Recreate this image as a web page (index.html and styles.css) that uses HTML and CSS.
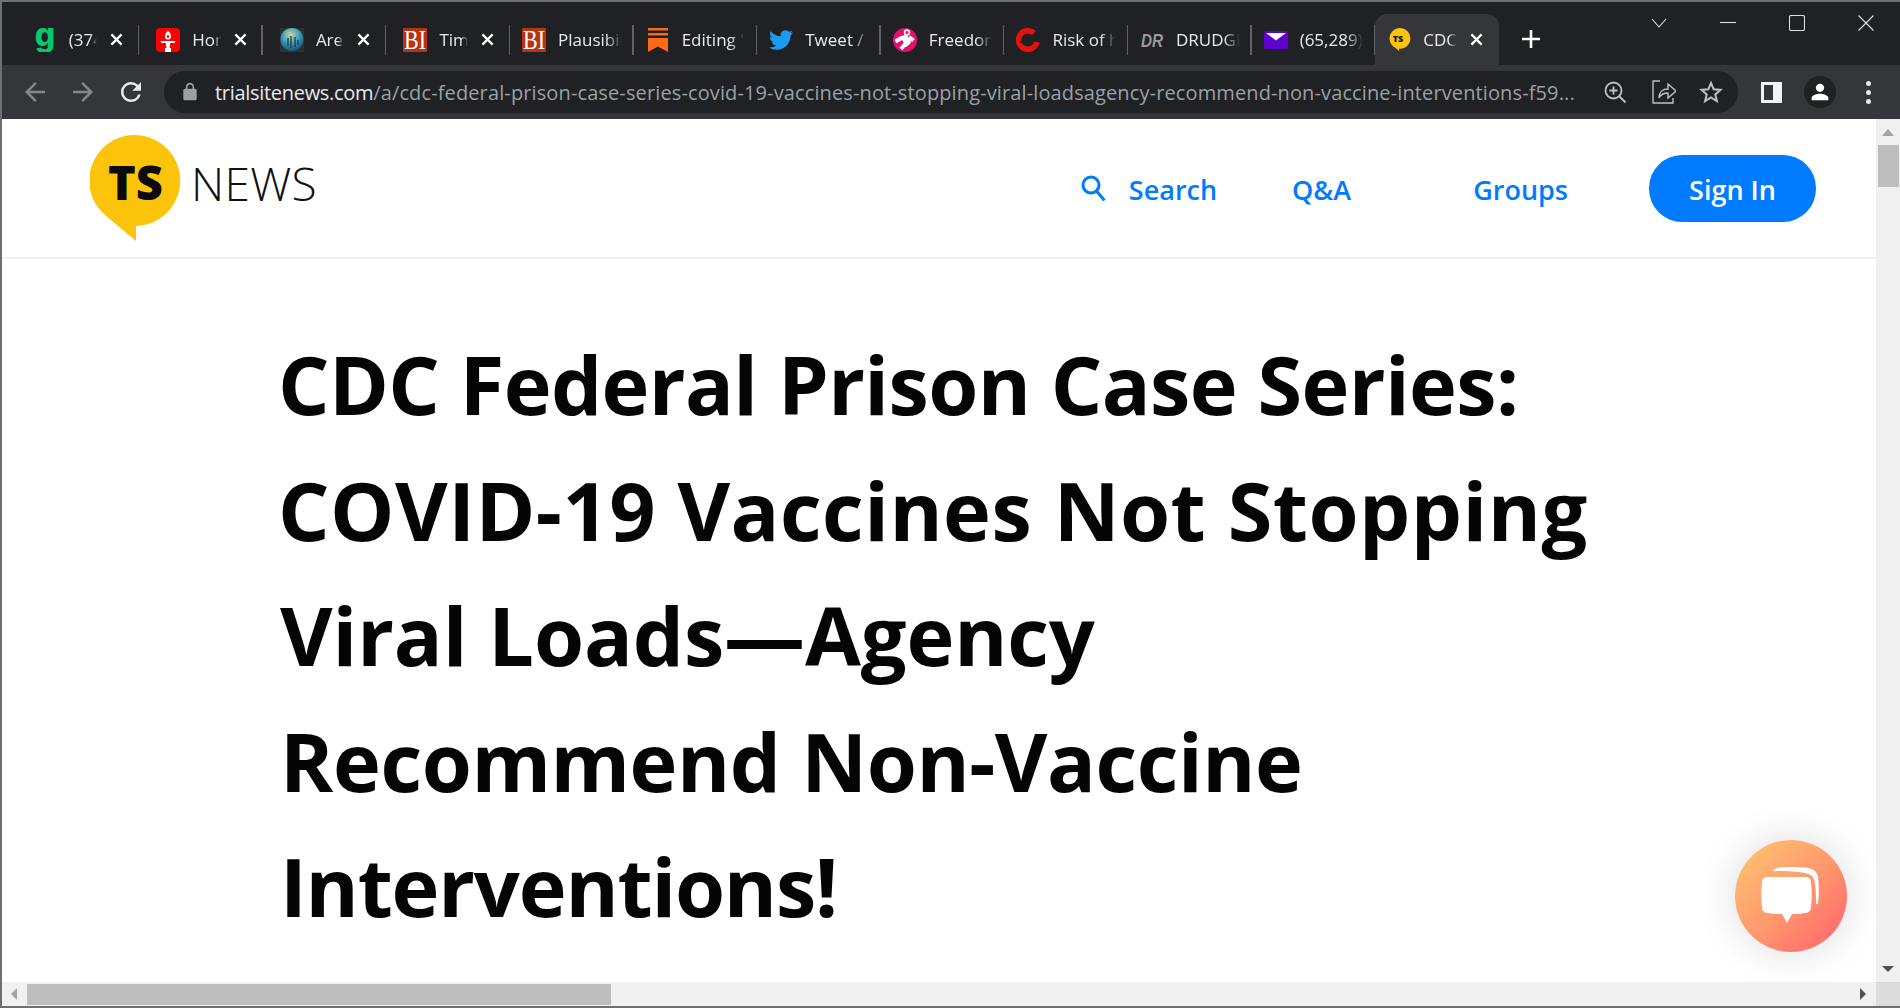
FILE: index.html
```html
<!DOCTYPE html>
<html lang="en">
<head>
<meta charset="UTF-8">
<meta name="viewport" content="width=device-width, initial-scale=1.0">
<title>CDC Federal Prison Case Series</title>
<link rel="stylesheet" href="styles.css">
</head>
<body>

<div class="tabstrip">
  <div class="tab has-close">
    <svg class="favicon" viewBox="0 0 24 24"><text x="12" y="17.600" text-anchor="middle" class="fav-g">g</text></svg>
    <span class="tab-title">(374) Grammarly</span>
    <svg class="tab-close" viewBox="0 0 14 14"><path d="M1.5 1.500l11 11M12.500 1.500l-11 11"/></svg>
  </div>
  <div class="tab has-close">
    <svg class="favicon" viewBox="0 0 24 24">
      <rect width="24" height="24" rx="4" fill="#f20505"/>
      <path d="M12 2.500c2.200 2.300 3 4.300 3 6a3 3 0 0 1-6 0c0-1.700.8-3.700 3-6z" fill="#fff"/>
      <path d="M12 6.500c.8 1 1.100 1.800 1.100 2.500a1.100 1.100 0 0 1-2.200 0c0-.7.3-1.500 1.100-2.500z" fill="#f20505"/>
      <path d="M4.500 13h15l-1 2h-4.200l-.8 5H15v4H9v-4h1.500l-.8-5H5.500z" fill="#fff"/>
    </svg>
    <span class="tab-title">Home</span>
    <svg class="tab-close" viewBox="0 0 14 14"><path d="M1.5 1.500l11 11M12.500 1.500l-11 11"/></svg>
  </div>
  <div class="tab has-close">
    <svg class="favicon" viewBox="0 0 24 24">
      <defs><radialGradient id="globe" cx="0.45" cy="0.3" r="0.75"><stop offset="0" stop-color="#c4d8a0"/><stop offset="0.5" stop-color="#3c9cc0"/><stop offset="1" stop-color="#164a62"/></radialGradient></defs>
      <rect width="24" height="24" fill="#2c3234"/>
      <circle cx="12" cy="11.500" r="11.500" fill="url(#globe)"/>
      <path d="M8 10v8M11 8v12M15 9v10M18 12v5" stroke="#1b3440" stroke-width="1.200"/>
    </svg>
    <span class="tab-title">Are</span>
    <svg class="tab-close" viewBox="0 0 14 14"><path d="M1.5 1.500l11 11M12.500 1.500l-11 11"/></svg>
  </div>
  <div class="tab has-close">
    <svg class="favicon" viewBox="0 0 24 24"><rect width="24" height="24" rx="1" fill="#b8330f"/><text x="12" y="21" text-anchor="middle" textLength="22" lengthAdjust="spacingAndGlyphs" class="fav-bi">BI</text></svg>
    <span class="tab-title">Time</span>
    <svg class="tab-close" viewBox="0 0 14 14"><path d="M1.5 1.500l11 11M12.500 1.500l-11 11"/></svg>
  </div>
  <div class="tab">
    <svg class="favicon" viewBox="0 0 24 24"><rect width="24" height="24" rx="1" fill="#b8330f"/><text x="12" y="21" text-anchor="middle" textLength="22" lengthAdjust="spacingAndGlyphs" class="fav-bi">BI</text></svg>
    <span class="tab-title">Plausibility</span>
  </div>
  <div class="tab">
    <svg class="favicon" viewBox="0 0 24 24"><path d="M2 0h20v2.500H2zM2 5h20v2.500H2zM2 10h20v14l-10-5.500L2 24z" fill="#ff6719"/></svg>
    <span class="tab-title">Editing 'Vaccines'</span>
  </div>
  <div class="tab">
    <svg class="favicon" viewBox="0 0 24 24"><path d="M23.953 4.570a10 10 0 01-2.825.775 4.958 4.958 0 002.163-2.723c-.951.555-2.005.959-3.127 1.184a4.920 4.920 0 00-8.384 4.482C7.690 8.095 4.067 6.130 1.640 3.162a4.822 4.822 0 00-.666 2.475c0 1.710.870 3.213 2.188 4.096a4.904 4.904 0 01-2.228-.616v.060a4.923 4.923 0 003.946 4.827 4.996 4.996 0 01-2.212.085 4.936 4.936 0 004.604 3.417 9.867 9.867 0 01-6.102 2.105c-.390 0-.779-.023-1.170-.067a13.995 13.995 0 007.557 2.209c9.053 0 13.998-7.496 13.998-13.985 0-.210 0-.420-.015-.630A9.935 9.935 0 0024 4.590z" fill="#1d9bf0"/></svg>
    <span class="tab-title">Tweet / Twitter</span>
  </div>
  <div class="tab">
    <svg class="favicon" viewBox="0 0 24 24">
      <circle cx="12" cy="12" r="12" fill="#e5106b"/>
      <circle cx="14" cy="4.500" r="2.400" fill="none" stroke="#fff" stroke-width="1.600"/>
      <path d="M2.500 13.500l6-3.500 4.500-1 3 5-4 3.500M10.500 10l2.500 5-5 6M16 9l4.500 3.500" fill="none" stroke="#fff" stroke-width="4" stroke-linejoin="round"/>
    </svg>
    <span class="tab-title">Freedom</span>
  </div>
  <div class="tab">
    <svg class="favicon" viewBox="0 0 24 24">
      <path d="M18 5A9.300 9.300 0 1 0 21 14" fill="none" stroke="#e8120c" stroke-width="5.500"/>
      <path d="M4 13.500l6 3.500 6-1" fill="none" stroke="#202124" stroke-width="1.600"/>
    </svg>
    <span class="tab-title">Risk of harm</span>
  </div>
  <div class="tab">
    <svg class="favicon" viewBox="0 0 24 24"><text x="12" y="19" text-anchor="middle" textLength="22" lengthAdjust="spacingAndGlyphs" class="fav-dr">DR</text></svg>
    <span class="tab-title">DRUDGE</span>
  </div>
  <div class="tab">
    <svg class="favicon" viewBox="0 0 24 24"><rect y="3" width="24" height="18" rx="1.500" fill="#6001d2"/><path d="M2 5h20l-10 7.500z" fill="#fff"/></svg>
    <span class="tab-title">(65,289)</span>
  </div>
  <div class="tab tab-active has-close">
    <svg class="favicon" viewBox="0 0 24 24">
      <path d="M12 23l-4-3.400A10.400 10.400 0 1 1 12 20.800z" fill="#fcc30b"/>
      <text x="11" y="13.500" text-anchor="middle" class="fav-ts">TS</text>
    </svg>
    <span class="tab-title">CDC Federal</span>
    <svg class="tab-close" viewBox="0 0 14 14"><path d="M1.5 1.500l11 11M12.500 1.500l-11 11"/></svg>
  </div>

  <svg class="newtab" viewBox="0 0 18 18"><path d="M9 0v18M0 9h18"/></svg>

  <div class="winctl">
    <svg viewBox="0 0 16 16"><path d="M1 4l7 8 7-8"/></svg>
    <svg viewBox="0 0 16 16"><path d="M0 7.500h16"/></svg>
    <svg viewBox="0 0 16 16"><rect x="0.500" y="0.500" width="15" height="15" rx="1.500"/></svg>
    <svg viewBox="0 0 16 16"><path d="M0.500 0.500l15 15M15.500 0.500l-15 15"/></svg>
  </div>
</div>

<div class="toolbar">
  <svg class="tool tool-dim" viewBox="0 0 24 24"><path d="M20 11H7.830l5.590-5.590L12 4l-8 8 8 8 1.410-1.410L7.830 13H20v-2z"/></svg>
  <svg class="tool tool-dim" viewBox="0 0 24 24"><path d="M12 4l-1.410 1.410L16.170 11H4v2h12.170l-5.580 5.590L12 20l8-8z"/></svg>
  <svg class="tool" viewBox="0 0 24 24"><path d="M17.650 6.350A7.958 7.958 0 0012 4c-4.420 0-7.990 3.580-7.990 8s3.570 8 7.990 8c3.730 0 6.840-2.550 7.730-6h-2.080A5.990 5.990 0 0112 18c-3.310 0-6-2.690-6-6s2.690-6 6-6c1.660 0 3.140.690 4.220 1.780L13 11h7V4l-2.350 2.350z"/></svg>

  <div class="omnibox">
    <svg class="lock" viewBox="0 0 24 24"><path d="M18 8h-1V6c0-2.760-2.240-5-5-5S7 3.240 7 6v2H6c-1.100 0-2 .9-2 2v10c0 1.100.9 2 2 2h12c1.100 0 2-.9 2-2V10c0-1.100-.9-2-2-2zM9 8V6c0-1.660 1.340-3 3-3s3 1.340 3 3v2H9z"/></svg>
    <div class="url"><b>trialsitenews.com</b>/a/cdc-federal-prison-case-series-covid-19-vaccines-not-stopping-viral-loadsagency-recommend-non-vaccine-interventions-f59...</div>
    <svg class="omni-icon zoom-icon" viewBox="0 0 24 24"><circle cx="10.500" cy="10.500" r="8"/><path d="M16.500 16.500l6 6M10.500 6.500v8M6.500 10.500h8"/></svg>
    <svg class="omni-icon share-icon" viewBox="0 0 24 24"><path d="M8 1H1v22h20v-5"/><path d="M7 18c0-6 4-9 9-9V4l8 7-8 7v-5c-4 0-7 1-9 5z"/></svg>
    <svg class="omni-icon star-icon" viewBox="0 0 24 24"><path d="M12 3l2.700 6.300 6.800.6-5.200 4.500 1.600 6.700-5.900-3.600-5.900 3.600 1.600-6.700L2.500 9.900l6.800-.6z"/></svg>
  </div>

  <svg class="panel-icon" viewBox="0 0 21 21"><path d="M0 0h21v21H0zM3 3v15h9V3z" fill-rule="evenodd"/></svg>
  <div class="avatar"><svg viewBox="0 0 24 24"><path d="M12 12c2.760 0 5-2.240 5-5s-2.240-5-5-5-5 2.240-5 5 2.240 5 5 5zm0 2c-3.340 0-10 1.670-10 5v3h20v-3c0-3.330-6.660-5-10-5z"/></svg></div>
  <div class="dots"><i></i><i></i><i></i></div>
</div>

<div class="viewport">
  <div class="page">
    <header class="site-header">
      <a class="logo">
        <svg class="logo-mark" viewBox="0 0 91 106">
          <path d="M46 106L15 80A45.500 45.500 0 1 1 46 91z" fill="#fcc30b"/>
          <text x="45.500" y="65" text-anchor="middle" class="logo-ts">TS</text>
        </svg>
        <span class="logo-news">NEWS</span>
      </a>
      <nav class="site-nav">
        <a class="nav-search">
          <svg viewBox="0 0 26 26"><circle cx="10" cy="10" r="8"/><path d="M15.500 16l8 9.500"/></svg>
          Search
        </a>
        <a class="nav-qa">Q&amp;A</a>
        <a class="nav-groups">Groups</a>
        <a class="btn-signin">Sign In</a>
      </nav>
    </header>

    <main class="article">
      <h1>
        <span class="line-1">CDC Federal Prison Case Series:</span>
        <span class="line-2">COVID-19 Vaccines Not Stopping</span>
        <span class="line-3">Viral Loads—Agency</span>
        <span class="line-4">Recommend Non-Vaccine</span>
        <span class="line-5">Interventions!</span>
      </h1>
    </main>

    <div class="chat-widget">
      <svg viewBox="0 0 112 112">
        <path d="M38 31c2-3 6-4 14-4 9 0 16 0 21 1 6 1 9 4 10 9 1 8 1 19 0 27l-2 0c0-8 0-18-2-24-1-4-4-6-9-7-10-2-22-2-32-2z" fill="#fff"/>
        <path d="M33 37h37c4 0 6 2 6 6 1 8 1 16 0 24 0 4-3 6-6 6-4 1-8 1-13 1l-5 9-5-9c-5 0-10 0-14-1-3 0-6-2-6-6-1-8-1-16 0-24 0-4 2-6 6-6z" fill="#fff"/>
      </svg>
    </div>
  </div>

  <div class="vscroll">
    <span class="arrow-up"></span>
    <span class="vthumb"></span>
    <span class="arrow-down"></span>
  </div>
</div>

<div class="hscroll">
  <span class="arrow-left"></span>
  <span class="hthumb"></span>
  <span class="arrow-right"></span>
  <span class="corner"></span>
</div>

</body>
</html>
```

FILE: styles.css
```css
* {
  box-sizing: border-box;
}
html, body {
  margin: 0;
  height: 100%;
}
body {
  width: 1900px;
  height: 1008px;
  overflow: hidden;
  display: flex;
  flex-direction: column;
  border: 2px solid #6f6f6f;
  border-right: 0;
  font-family: "Open Sans", "Noto Sans", sans-serif;
  background: #fff;
}

/* tab strip */
.tabstrip {
  height: 63px;
  flex: none;
  display: flex;
  align-items: flex-end;
  padding-left: 13.700px;
  background: #202124;
}
.tab {
  position: relative;
  width: 123.600px;
  height: 51px;
  flex: none;
  display: flex;
  align-items: center;
  padding: 0 12px 0 12px;
  color: #e8eaed;
  font-size: 17px;
}
.tab.has-close {
  padding: 0 16px 0 17px;
}
.tab::after {
  content: "";
  position: absolute;
  right: 0;
  top: 11px;
  width: 1.500px;
  height: 30px;
  background: #5f6368;
}
.tab-active {
  background: #35363a;
  border-radius: 12px 12px 0 0;
}
.tab.tab-active {
  padding-left: 12px;
}
.tab-active::after {
  display: none;
}
.favicon {
  width: 24px;
  height: 24px;
  flex: none;
  margin-right: 12px;
}
.tab-title {
  flex: 1;
  min-width: 0;
  white-space: nowrap;
  overflow: hidden;
  -webkit-mask-image: linear-gradient(to right, #000 75%, transparent 100%);
  mask-image: linear-gradient(to right, #000 75%, transparent 100%);
}
.tab-close {
  width: 13px;
  height: 13px;
  flex: none;
  margin-left: 13px;
  fill: none;
  stroke: #fff;
  stroke-width: 2.400;
}
.fav-g {
  font: 800 32px Inter, sans-serif;
  fill: #06c96d;
}
.fav-bi {
  font: 400 28px "Liberation Serif", serif;
  fill: #fff;
}
.fav-dr {
  font: italic 700 19px "Liberation Sans", sans-serif;
  fill: #9a9a9a;
}
.fav-ts {
  font: 800 9px "Open Sans", sans-serif;
  fill: #111;
}
.newtab {
  width: 18px;
  height: 18px;
  flex: none;
  margin: 0 0 17px 23px;
  fill: none;
  stroke: #fff;
  stroke-width: 2.600;
}
.winctl {
  align-self: flex-start;
  display: flex;
  gap: 53px;
  margin: 13px 0 0 111px;
}
.winctl svg {
  width: 16px;
  height: 16px;
  fill: none;
  stroke: #dfe1e4;
  stroke-width: 1.100;
}

/* address bar row */
.toolbar {
  height: 54px;
  flex: none;
  display: flex;
  align-items: center;
  padding-left: 18px;
  background: #35363a;
}
.tool {
  width: 30px;
  height: 30px;
  flex: none;
  margin-right: 18px;
  fill: #e8eaed;
}
.tool-dim {
  fill: #85878b;
}
.omnibox {
  width: 1574px;
  height: 42px;
  flex: none;
  display: flex;
  align-items: center;
  padding-left: 16px;
  border-radius: 21px;
  background: #202124;
}
.lock {
  width: 20px;
  height: 20px;
  flex: none;
  margin-right: 15px;
  fill: #9aa0a6;
}
.url {
  width: 1362px;
  flex: none;
  white-space: nowrap;
  overflow: hidden;
  color: #9aa0a6;
  font-size: 20px;
  letter-spacing: 0.120px;
}
.url b {
  color: #e8eaed;
  font-weight: 400;
  letter-spacing: -0.300px;
}
.omni-icon {
  width: 24px;
  height: 24px;
  flex: none;
  fill: none;
  stroke: #bdc1c6;
  stroke-width: 1.800;
}
.zoom-icon {
  margin-left: 26px;
}
.share-icon {
  margin-left: 25px;
  stroke-width: 1.400;
}
.star-icon {
  margin-left: 23px;
  stroke-width: 2;
}
.panel-icon {
  width: 21px;
  height: 21px;
  flex: none;
  margin-left: 23px;
  fill: #f1f3f4;
}
.avatar {
  width: 32px;
  height: 32px;
  flex: none;
  margin-left: 22px;
  padding: 6px;
  border-radius: 50%;
  background: #202124;
}
.avatar svg {
  display: block;
  fill: #fff;
}
.dots {
  flex: none;
  display: flex;
  flex-direction: column;
  gap: 4px;
  margin-left: 30px;
}
.dots i {
  width: 5px;
  height: 5px;
  border-radius: 50%;
  background: #e8eaed;
}

/* page */
.viewport {
  flex: 1;
  min-height: 0;
  display: flex;
}
.page {
  position: relative;
  flex: 1;
  min-width: 0;
  overflow: hidden;
}
.site-header {
  height: 140px;
  display: flex;
  align-items: center;
  justify-content: space-between;
  padding: 0 60px 0 88px;
  border-bottom: 2px solid #f1f1f1;
}
.logo {
  display: flex;
  align-items: center;
}
.logo-mark {
  width: 91px;
  height: 106px;
  flex: none;
}
.logo-ts {
  font: 800 47px "Open Sans", sans-serif;
  fill: #0b0b0b;
}
.logo-news {
  margin: -11px 0 0 10px;
  color: #111;
  font-size: 46px;
  font-weight: 300;
  letter-spacing: 0.300px;
}
.site-nav {
  display: flex;
  align-items: center;
  color: #007bff;
  font-size: 27px;
  font-weight: 600;
}
.site-nav a {
  padding-top: 3px;
}
.nav-search {
  display: flex;
  align-items: center;
  gap: 22px;
}
.nav-search svg {
  width: 26px;
  height: 26px;
  fill: none;
  stroke: #007bff;
  stroke-width: 3;
  margin-top: -3px;
}
.nav-qa {
  margin-left: 75px;
}
.nav-groups {
  margin-left: 122px;
}
.btn-signin {
  margin-left: 81px;
  width: 167px;
  height: 67px;
  display: flex;
  align-items: center;
  justify-content: center;
  border-radius: 33px;
  color: #fff;
  background: #007bff;
}
.article {
  padding: 62px 0 0 278px;
}
h1 {
  margin: 0;
  color: #050505;
  font-size: 81px;
  font-weight: 700;
  line-height: 125.500px;
}
h1 span {
  display: block;
  white-space: nowrap;
}
.line-1 { letter-spacing: -0.600px; margin-left: -2px; }
.line-2 { letter-spacing: 0.470px; margin-left: -2px; }
.line-3 { letter-spacing: -0.100px; }
.line-4 { letter-spacing: -0.430px; }
.line-5 { letter-spacing: -1.200px; }
.chat-widget {
  position: absolute;
  left: 1733px;
  top: 721px;
  width: 112px;
  height: 112px;
  border-radius: 50%;
  background: linear-gradient(135deg, #fec671 0%, #ff9a6e 50%, #ff5f6d 100%);
  box-shadow: 0 0 40px rgba(0, 0, 0, 0.14);
}

/* scrollbars */
.vscroll {
  position: relative;
  width: 24px;
  flex: none;
  background: #f0f0f0;
}
.vthumb {
  position: absolute;
  left: 2px;
  top: 26px;
  width: 21px;
  height: 42px;
  background: #bdbdbd;
}
.arrow-up, .arrow-down {
  position: absolute;
  left: 6px;
  border-left: 6px solid transparent;
  border-right: 6px solid transparent;
}
.arrow-up {
  top: 10px;
  border-bottom: 7px solid #a3a3a3;
}
.arrow-down {
  bottom: 10px;
  border-top: 6px solid #505050;
}
.hscroll {
  position: relative;
  height: 24px;
  flex: none;
  background: #f0f0f0;
}
.hthumb {
  position: absolute;
  left: 25px;
  top: 2px;
  width: 584px;
  height: 21px;
  background: #bdbdbd;
}
.arrow-left, .arrow-right {
  position: absolute;
  top: 6px;
  border-top: 6px solid transparent;
  border-bottom: 6px solid transparent;
}
.arrow-left {
  left: 9px;
  border-right: 6px solid #a3a3a3;
}
.arrow-right {
  right: 34px;
  border-left: 6px solid #505050;
}
.corner {
  position: absolute;
  right: 0;
  top: 0;
  width: 24px;
  height: 24px;
  background: #dcdcdc;
}
```
